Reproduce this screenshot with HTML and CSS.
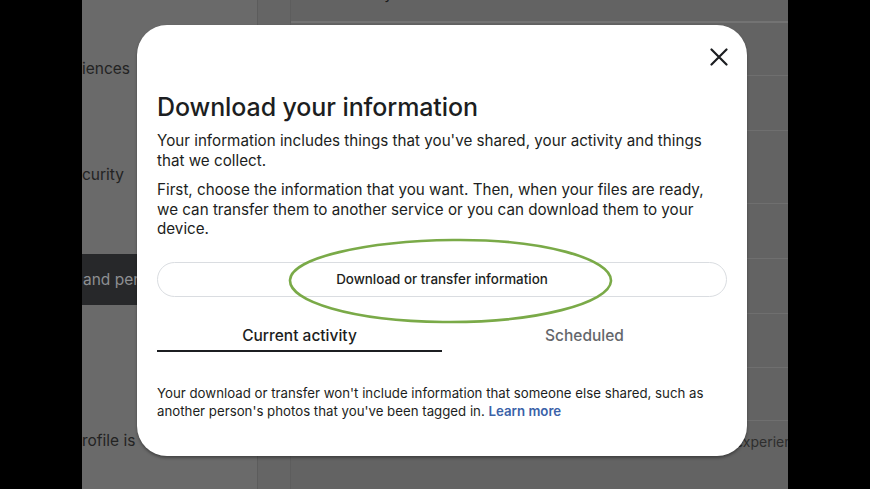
FILE: index.html
```html
<!DOCTYPE html>
<html lang="en">
<head>
<meta charset="utf-8">
<title>Download your information</title>
<link rel="stylesheet" href="styles.css">
</head>
<body>
<div class="stage">
  <div class="letterbox"></div>
  <div class="page">
    <aside class="sidebar">
      <div class="side-item side-a">iences</div>
      <div class="side-item side-b">curity</div>
      <div class="side-item side-sel">and permissions</div>
      <div class="side-item side-c">rofile is</div>
    </aside>
    <div class="gutter"></div>
    <main class="main">
      <div class="main-head"><span>Download your information</span></div>
      <div class="row r1"></div>
      <div class="row r2"></div>
      <div class="row r3"></div>
      <div class="row r4"></div>
      <div class="row r5"></div>
      <div class="row r6"></div>
      <div class="row r7"></div>
      <div class="row r8"><span class="row-text">experiences</span></div>
    </main>
  </div>
  <div class="letterbox"></div>

  <section class="modal">
    <div class="modal-top">
      <button class="close" aria-label="Close">
        <svg width="18" height="18" viewBox="0 0 18 18"><path d="M1.5 1.5 L16.5 16.5 M16.5 1.5 L1.5 16.5" stroke="#1c1e21" stroke-width="2.2" stroke-linecap="round" fill="none"/></svg>
      </button>
    </div>
    <h1 class="title">Download your information</h1>
    <p class="text p1">Your information includes things that you've shared, your activity and things that we collect.</p>
    <p class="text p2">First, choose the information that you want. Then, when your files are ready, we can transfer them to another service or you can download them to your device.</p>
    <button class="pill">Download or transfer information</button>
    <div class="tabs">
      <div class="tab active">Current activity</div>
      <div class="tab">Scheduled</div>
    </div>
    <p class="note">Your download or transfer won't include information that someone else shared, such as another person's photos that you've been tagged in. <a class="link" href="#">Learn more</a></p>
    <svg class="circle" width="340" height="100" viewBox="0 0 340 100">
      <path d="M172 9 C 262 8, 331 28, 330 50 C 329 72, 255 92, 162 91 C 70 90, 8 70, 9 49 C 10 27, 85 10, 172 9 Z" fill="none" stroke="#7aaa48" stroke-width="2.6"/>
    </svg>
  </section>
</div>
</body>
</html>
```
FILE: styles.css
```css
* { box-sizing: border-box; }
html, body { margin: 0; padding: 0; }
body {
  width: 870px;
  height: 489px;
  overflow: hidden;
  background: #000;
  font-family: Inter, "Noto Sans", "Liberation Sans", sans-serif;
}
.stage {
  position: relative;
  display: flex;
  width: 870px;
  height: 489px;
}
.letterbox {
  width: 82px;
  flex: none;
  background: #000;
}
.page {
  flex: 1;
  display: flex;
  background: #636363;
  overflow: hidden;
}
.sidebar {
  width: 176px;
  flex: none;
  background: #6a6a6a;
  border-right: 1px solid #5c5c5c;
  display: flex;
  flex-direction: column;
}
.side-item {
  font-size: 15.5px;
  color: #232323;
  white-space: nowrap;
  line-height: 20px;
}
.side-a { margin-top: 59px; }
.side-b { margin-top: 86px; }
.side-sel {
  margin-top: 69px;
  height: 51px;
  line-height: 51px;
  background: #27282a;
  color: #8d8f92;
  padding-left: 1px;
}
.side-c { margin-top: 126px; }
.gutter {
  width: 33px;
  flex: none;
  background: #656565;
  border-right: 1px solid #5d5d5d;
}
.main {
  flex: 1;
  display: flex;
  flex-direction: column;
}
.main-head {
  height: 23px;
  border-bottom: 2px solid #737373;
  padding-left: 18px;
  overflow: hidden;
}
.main-head span {
  display: block;
  margin-top: -16px;
  font-size: 15px;
  color: #1a1a1a;
}
.row { border-bottom: 1px solid #6f6f6f; flex: none; }
.r1 { height: 53px; }
.r2 { height: 55px; }
.r3 { height: 73px; }
.r4 { height: 55px; }
.r5 { height: 55px; }
.r6 { height: 54px; }
.r7 { height: 53px; }
.r8 { border-bottom: none; padding-top: 10px; padding-left: 444px; white-space: nowrap; }
.row-text { font-size: 14px; color: #2e2e2e; }

/* modal */
.modal {
  position: absolute;
  left: 137px;
  top: 25px;
  width: 610px;
  height: 431px;
  background: #fff;
  border-radius: 30px;
  box-shadow: 0 2px 3px rgba(0,0,0,0.35);
  padding: 0 20px;
  color: #1c1e21;
}
.modal-top {
  display: flex;
  justify-content: flex-end;
  padding-top: 20px;
  margin-right: -4px;
}
.close {
  width: 24px;
  height: 24px;
  border: none;
  background: none;
  padding: 0;
  display: flex;
  align-items: center;
  justify-content: center;
}
.title {
  margin: 23px 0 0;
  font-size: 25px;
  line-height: 30px;
  font-weight: 500;
  letter-spacing: -0.1px;
}
.text {
  margin: 9px 0 0;
  font-size: 15.2px;
  line-height: 19.5px;
  color: #1c1e21;
}
.p2 { margin-top: 10px; }
.pill {
  display: block;
  width: 100%;
  height: 35px;
  margin-top: 23px;
  border: 1px solid #dadde1;
  border-radius: 18px;
  background: #fff;
  font-family: inherit;
  font-size: 13.4px;
  font-weight: 500;
  color: #1c1e21;
}
.tabs {
  display: flex;
  margin-top: 15px;
}
.tab {
  flex: 1;
  text-align: center;
  font-size: 15.5px;
  line-height: 20px;
  font-weight: 500;
  color: #65676b;
  padding: 14px 0 4px;
  border-bottom: 2px solid transparent;
}
.tab.active {
  color: #1c1e21;
  border-bottom-color: #1c1e21;
}
.note {
  margin: 32px 0 0;
  font-size: 13.25px;
  line-height: 18px;
  color: #1c1e21;
}
.link {
  color: #3a62a8;
  font-weight: 600;
  text-decoration: none;
}
.circle {
  position: absolute;
  left: 144px;
  top: 206px;
  pointer-events: none;
}
```
